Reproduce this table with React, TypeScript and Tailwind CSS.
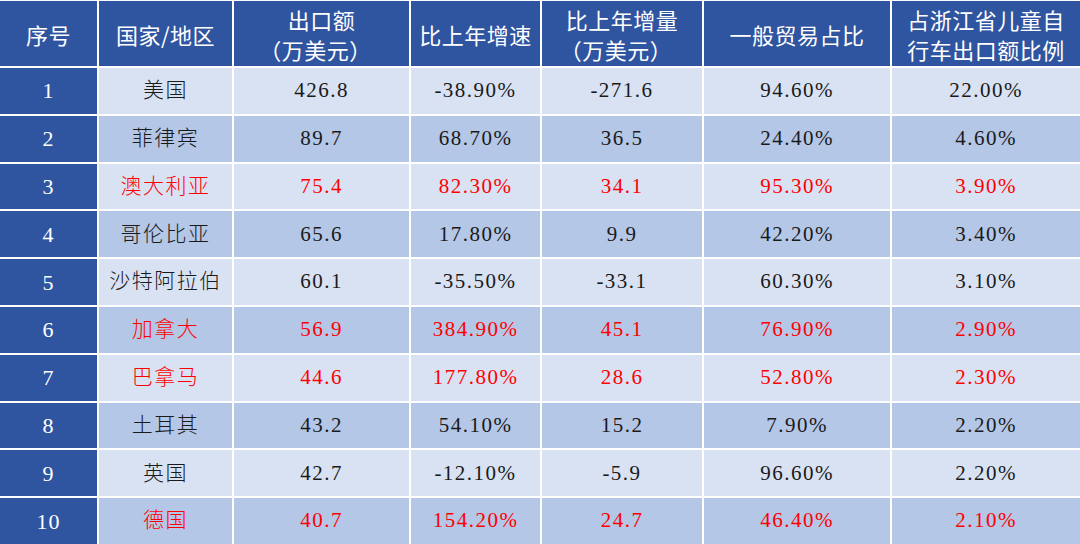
import React from "react";

type Row = { n: string; c: string; a: string; b: string; d: string; e: string; f: string; red?: boolean };

const rows: Row[] = [
  { n: "1", c: "美国", a: "426.8", b: "-38.90%", d: "-271.6", e: "94.60%", f: "22.00%" },
  { n: "2", c: "菲律宾", a: "89.7", b: "68.70%", d: "36.5", e: "24.40%", f: "4.60%" },
  { n: "3", c: "澳大利亚", a: "75.4", b: "82.30%", d: "34.1", e: "95.30%", f: "3.90%", red: true },
  { n: "4", c: "哥伦比亚", a: "65.6", b: "17.80%", d: "9.9", e: "42.20%", f: "3.40%" },
  { n: "5", c: "沙特阿拉伯", a: "60.1", b: "-35.50%", d: "-33.1", e: "60.30%", f: "3.10%" },
  { n: "6", c: "加拿大", a: "56.9", b: "384.90%", d: "45.1", e: "76.90%", f: "2.90%", red: true },
  { n: "7", c: "巴拿马", a: "44.6", b: "177.80%", d: "28.6", e: "52.80%", f: "2.30%", red: true },
  { n: "8", c: "土耳其", a: "43.2", b: "54.10%", d: "15.2", e: "7.90%", f: "2.20%" },
  { n: "9", c: "英国", a: "42.7", b: "-12.10%", d: "-5.9", e: "96.60%", f: "2.20%" },
  { n: "10", c: "德国", a: "40.7", b: "154.20%", d: "24.7", e: "46.40%", f: "2.10%", red: true },
];

const headers: string[][] = [
  ["序号"],
  ["国家/地区"],
  ["出口额", "（万美元）"],
  ["比上年增速"],
  ["比上年增量", "（万美元）"],
  ["一般贸易占比"],
  ["占浙江省儿童自", "行车出口额比例"],
];

export default function App() {
  return (
    <div className="w-[1080px] h-[544px] bg-white pt-px overflow-hidden">
      <div className="grid h-[543px] grid-cols-[97px_133px_175px_129px_160px_186px_188px] grid-rows-[65px_repeat(10,minmax(0,1fr))] gap-[2px]">
        {headers.map((h, i) => (
          <div
            key={i}
            className="bg-[#2f54a0] text-white flex flex-col items-center justify-center font-['Noto_Sans_CJK_SC',sans-serif] text-[22px] leading-[30px] tracking-[0.5px]"
          >
            {h.map((l, j) => (
              <span key={j} className={l.startsWith("（") ? "-ml-[12px]" : ""}>
                {l}
              </span>
            ))}
          </div>
        ))}
        {rows.map((r, i) => {
          const bg = i % 2 === 0 ? "bg-[#d9e2f3]" : "bg-[#b4c7e7]";
          const tc = r.red ? "text-[#ff0000]" : "text-[#1a1a1a]";
          const cells = [r.c, r.a, r.b, r.d, r.e, r.f];
          return (
            <React.Fragment key={i}>
              <div className="bg-[#2f54a0] text-white flex items-center justify-center font-['Liberation_Serif',serif] text-[22px] tracking-[1px]">
                {r.n}
              </div>
              {cells.map((c, j) => (
                <div
                  key={j}
                  className={`${bg} ${tc} flex items-center justify-center font-['Liberation_Serif','Noto_Sans_CJK_SC',serif] font-light text-[21px] tracking-[1.5px]`}
                >
                  {c}
                </div>
              ))}
            </React.Fragment>
          );
        })}
      </div>
    </div>
  );
}
